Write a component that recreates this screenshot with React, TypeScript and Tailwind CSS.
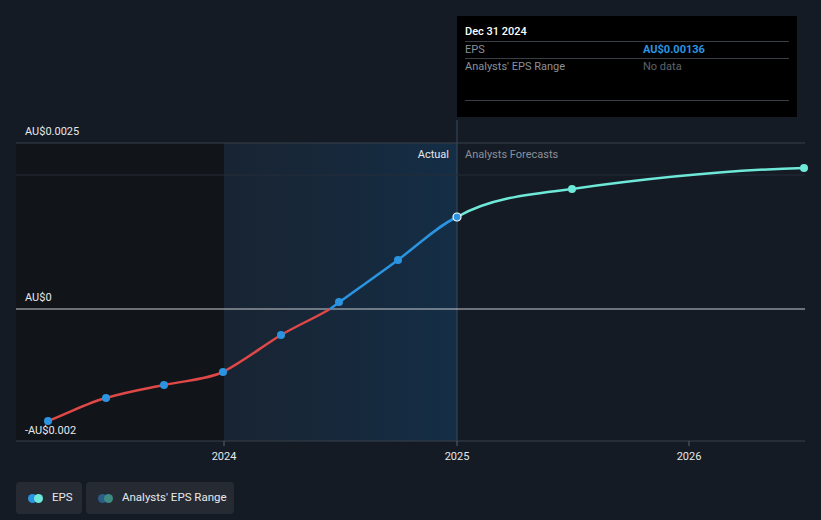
import React from 'react';

const App: React.FC = () => {
  return (
    <div className="relative w-[821px] h-[520px] bg-[#151b24] overflow-hidden" style={{ fontFamily: 'Roboto, "Liberation Sans", sans-serif' }}>
      <svg className="absolute left-0 top-0" width="821" height="470" viewBox="0 0 821 470">
        <defs>
          <linearGradient id="hl" x1="0" y1="0" x2="1" y2="0">
            <stop offset="0" stopColor="#1a2a3c" stopOpacity="0.6" />
            <stop offset="1" stopColor="#14304a" stopOpacity="0.9" />
          </linearGradient>
        </defs>
        <rect x="16" y="143" width="208" height="298" fill="#111419" />
        <rect x="224" y="143" width="233" height="298" fill="url(#hl)" />
        <line x1="457" y1="120" x2="457" y2="441" stroke="#3a4a5c" strokeWidth="1" />
        <line x1="16" y1="143" x2="805" y2="143" stroke="#3a404a" />
        <line x1="16" y1="175" x2="805" y2="175" stroke="#262d38" />
        <line x1="16" y1="309" x2="805" y2="309" stroke="#c8ccd2" />
        <line x1="16" y1="441" x2="805" y2="441" stroke="#3a404a" />
        <line x1="224" y1="441" x2="224" y2="446" stroke="#5a6270" />
        <line x1="457" y1="441" x2="457" y2="446" stroke="#5a6270" />
        <line x1="689" y1="441" x2="689" y2="446" stroke="#5a6270" />
        <text x="25" y="135" fill="#e6e8eb" fontSize="11">AU$0.0025</text>
        <text x="25" y="301" fill="#e6e8eb" fontSize="11">AU$0</text>
        <text x="25" y="434" fill="#e6e8eb" fontSize="11">-AU$0.002</text>
        <text x="224" y="460" fill="#e6e8eb" fontSize="11" textAnchor="middle">2024</text>
        <text x="457" y="460" fill="#e6e8eb" fontSize="11" textAnchor="middle">2025</text>
        <text x="689" y="460" fill="#e6e8eb" fontSize="11" textAnchor="middle">2026</text>
        <text x="449" y="158" fill="#e6e8eb" fontSize="11" textAnchor="end">Actual</text>
        <text x="465" y="158" fill="#8a9099" fontSize="11">Analysts Forecasts</text>
        <path d="M48 421 C75 410 90 402 106 398 C130 391 145 389 164 385 C190 380 208 379 223 372 C245 360 260 348 281 335 C300 324 315 318 330 309" fill="none" stroke="#e04848" strokeWidth="2.5" />
        <path d="M330 309 C350 294 375 277 398 260 C420 243 438 226 457 217" fill="none" stroke="#2a94e0" strokeWidth="2.5" />
        <path d="M457 217 C490 198 530 194 572 189 C650 178 730 170 804 168" fill="none" stroke="#6ee8d8" strokeWidth="2.5" />
        {[[48, 421], [106, 398], [164, 385], [223, 372], [281, 335], [339, 302], [398, 260]].map(([x, y]) => (
          <circle key={x} cx={x} cy={y} r="4" fill="#2a94e0" />
        ))}
        <circle cx="457" cy="217" r="4" fill="#2a94e0" stroke="#ffffff" strokeWidth="1.2" />
        <circle cx="572" cy="189" r="4" fill="#6ee8d8" />
        <circle cx="804" cy="168" r="4" fill="#6ee8d8" />
      </svg>

      <div className="absolute left-[457px] top-[16px] w-[340px] h-[101px] bg-black px-[8px] pt-[8px] text-[11px]">
        <div className="text-white font-medium pb-[2px] border-b border-[#3a3f47] h-[18px]">Dec 31 2024</div>
        <div className="flex h-[17px] items-center border-b border-[#3a3f47] text-[#8a9099]">
          <span className="w-[178px]">EPS</span>
          <span className="text-[#2a94e0] font-bold">AU$0.00136</span>
        </div>
        <div className="flex h-[17px] items-center text-[#8a9099]">
          <span className="w-[178px]">Analysts' EPS Range</span>
          <span className="text-[#5e646c]">No data</span>
        </div>
        <div className="mt-[24px] border-b border-[#3a3f47]" />
      </div>

      <div className="absolute left-[16px] top-[482px] flex gap-[4px] text-[11.5px] text-[#e6e8eb]">
        <div className="h-[32px] w-[66px] pl-[12px] bg-[#262b33] rounded flex items-center gap-[9px]">
          <span className="flex"><span className="w-[9px] h-[9px] rounded-full bg-[#2a94e0]" /><span className="w-[9px] h-[9px] rounded-full bg-[#6ee8d8] -ml-[3px]" /></span>
          EPS
        </div>
        <div className="h-[32px] w-[148px] pl-[12px] bg-[#262b33] rounded flex items-center gap-[9px]">
          <span className="flex"><span className="w-[9px] h-[9px] rounded-full bg-[#2a5e88]" /><span className="w-[9px] h-[9px] rounded-full bg-[#3f8a82] -ml-[3px]" /></span>
          Analysts' EPS Range
        </div>
      </div>
    </div>
  );
};

export default App;
